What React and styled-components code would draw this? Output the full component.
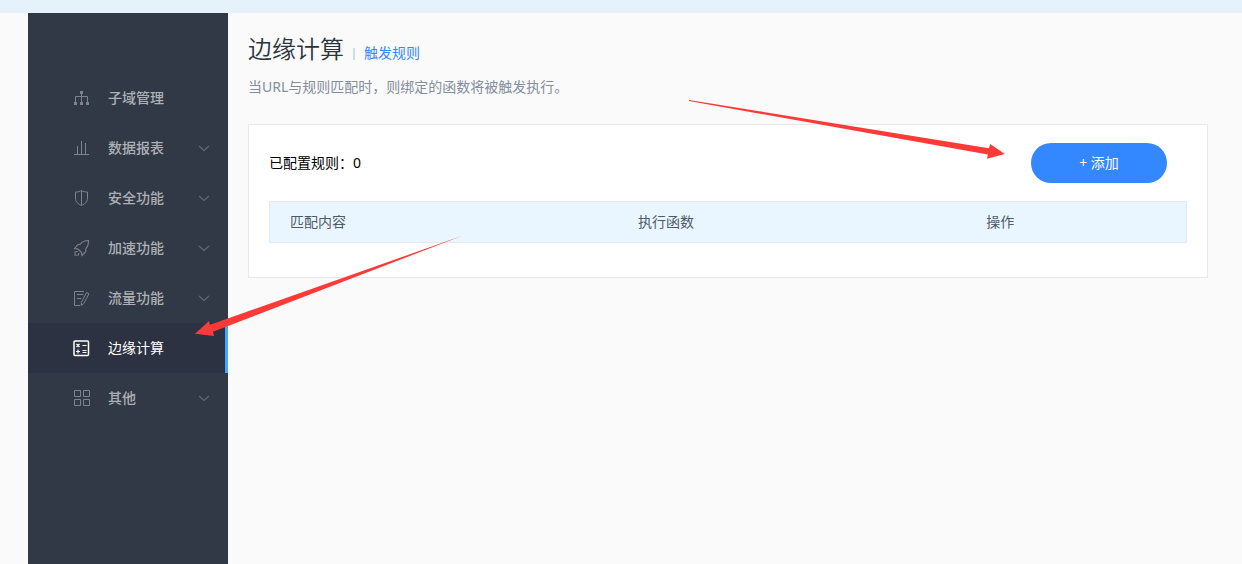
import React from "react";
import styled, { createGlobalStyle } from "styled-components";

const GlobalStyle = createGlobalStyle`
  *, *::before, *::after { box-sizing: border-box; }
  html, body, #root { height: 100%; }
  body {
    margin: 0;
    background: #fafafa;
    font-family: "Noto Sans", "Noto Sans CJK SC", sans-serif;
    font-size: 14px;
    line-height: 20px;
    color: #000;
  }
`;

const Page = styled.div`
  position: relative;
  display: flex;
  flex-direction: column;
  min-height: 100%;
  overflow: hidden;
`;

const TopBar = styled.header`
  flex: none;
  height: 13px;
  background: #e6f2fb;
`;

const Body = styled.div`
  flex: 1;
  display: flex;
  padding: 0 34px 0 28px;
`;

const Sidebar = styled.nav`
  flex: none;
  width: 200px;
  padding-top: 60px;
  background: #323946;
`;

const Menu = styled.ul`
  margin: 0;
  padding: 0;
  list-style: none;
`;

const MenuLink = styled.a`
  display: flex;
  align-items: center;
  height: 50px;
  padding: 0 18px 0 45px;
  border-right: 3px solid ${(p) => (p.$active ? "#3fa9ff" : "transparent")};
  background: ${(p) => (p.$active ? "#2d3242" : "transparent")};
  color: ${(p) => (p.$active ? "#fff" : "#adb0b5")};
  font-weight: ${(p) => (p.$active ? 400 : 500)};
  text-decoration: none;
`;

const MenuIcon = styled.svg`
  flex: none;
  width: 18px;
  height: 18px;
  margin-right: 17px;
  fill: none;
  stroke: currentColor;
  color: ${(p) => (p.$active ? "#fff" : "#7d828b")};
`;

const MenuLabel = styled.span`
  flex: 1;
`;

const Chevron = styled.svg`
  width: 12px;
  height: 8px;
  margin-right: -3px;
  fill: none;
  stroke: #646970;
  stroke-width: 1.2;
`;

const Main = styled.main`
  flex: 1;
  min-width: 0;
  padding: 20px 0 20px 20px;
`;

const TitleRow = styled.div`
  display: flex;
  align-items: flex-end;
  height: 32px;
`;

const Title = styled.h1`
  margin: 0;
  font-size: 24px;
  line-height: 32px;
  font-weight: 350;
  color: #2b3540;
`;

const Divider = styled.span`
  width: 2px;
  height: 12px;
  margin: 0 9px 5px;
  background: #ccdcec;
`;

const SubLink = styled.a`
  line-height: 24px;
  color: #3388ff;
  text-decoration: none;
`;

const Description = styled.p`
  margin: 12px 0 27px;
  color: #848e9c;
`;

const Card = styled.section`
  padding: 18px 20px 34px;
  border: 1px solid #e6e8ec;
  background: #fff;
`;

const CardHeader = styled.div`
  display: flex;
  align-items: center;
  justify-content: space-between;
  margin-bottom: 18px;
  padding-right: 20px;
`;

const AddButton = styled.button`
  width: 136px;
  height: 40px;
  padding: 0;
  border: 0;
  border-radius: 20px;
  background: #3388ff;
  color: #fff;
  font: inherit;
  cursor: pointer;
`;

const RuleTable = styled.table`
  width: 100%;
  table-layout: fixed;
  border-spacing: 0;
  border: 1px solid #e2e9f0;
  background: #e9f6ff;
`;

const HeadCell = styled.th`
  width: ${(p) => p.$width};
  height: 40px;
  padding: 0 20px;
  text-align: left;
  font-weight: 400;
  color: #4e5a68;
`;

const Annotations = styled.svg`
  position: absolute;
  top: 0;
  left: 0;
  width: 1242px;
  height: 564px;
  fill: #fc3a38;
  pointer-events: none;
`;

const icons = {
  tree: (
    <>
      <path d="M8.5 4v10M2.5 14V7.5h12V14" />
      <path fill="currentColor" stroke="none" d="M7 2h3v3H7zM1 13h3v3H1zM7 13h3v3H7zM13 13h3v3h-3z" />
    </>
  ),
  bars: <path d="M1 15.5h15M4.5 7v8M8.5 2v13M12.5 4v11" />,
  shield: <path d="M8.5 1.5C7 2.6 4.8 3 2.5 3v6c0 4 2.8 6.2 6 7.5 3.2-1.3 6-3.5 6-7.5V3c-2.3 0-4.5-.4-6-1.5zM8.500 1.5v15" />,
  rocket: (
    <path
      strokeWidth="1.1"
      d="M15.5 1.5C12 1.5 9.500 2.500 7.500 5L4.500 6 1.500 9.500l3.500.5 3.500 3.500.5 3 3.500-3.500.5-3.500C15 7.500 15.700 5 15.500 1.500zM4.800 12.500L2 13v3.200l3.500-.2.500-2"
    />
  ),
  note: (
    <path d="M11 2.500H1.500v14H7M4 5.500h6.500M4 9.500h4M13.600 3.600l2.400 1.200-5.200 9.700-2.600 2 .2-3.200z" />
  ),
  calc: (
    <>
      <rect x="1" y="2" width="14.500" height="14.500" rx="1" strokeWidth="1.500" />
      <path d="M3.500 5l3 3M6.500 5l-3 3M9.500 6.500h4M3 12.500h4M5 10.500v4M9.500 11.500h4M9.500 13.500h4" strokeWidth="1.200" />
    </>
  ),
  grid: <path d="M1.500 1.500h6v6h-6zM10.500 1.500h6v6h-6zM1.500 10.500h6v6h-6zM10.500 10.500h6v6h-6z" />,
};

const menuItems = [
  { icon: "tree", label: "子域管理" },
  { icon: "bars", label: "数据报表", expandable: true },
  { icon: "shield", label: "安全功能", expandable: true },
  { icon: "rocket", label: "加速功能", expandable: true },
  { icon: "note", label: "流量功能", expandable: true },
  { icon: "calc", label: "边缘计算", active: true },
  { icon: "grid", label: "其他", expandable: true },
];

export default function App() {
  return (
    <Page>
      <GlobalStyle />
      <TopBar />
      <Body>
        <Sidebar>
          <Menu>
            {menuItems.map(({ icon, label, expandable, active }) => (
              <li key={label}>
                <MenuLink href="#" $active={active} aria-current={active ? "page" : undefined}>
                  <MenuIcon viewBox="0 0 18 18" $active={active} aria-hidden="true">
                    {icons[icon]}
                  </MenuIcon>
                  <MenuLabel>{label}</MenuLabel>
                  {expandable && (
                    <Chevron viewBox="0 0 12 8" aria-hidden="true">
                      <path d="M1 2l5 4.500L11 2" />
                    </Chevron>
                  )}
                </MenuLink>
              </li>
            ))}
          </Menu>
        </Sidebar>
        <Main>
          <TitleRow>
            <Title>边缘计算</Title>
            <Divider />
            <SubLink href="#">触发规则</SubLink>
          </TitleRow>
          <Description>当URL与规则匹配时，则绑定的函数将被触发执行。</Description>
          <Card>
            <CardHeader>
              <span>已配置规则：0</span>
              <AddButton type="button">+ 添加</AddButton>
            </CardHeader>
            <RuleTable>
              <thead>
                <tr>
                  <HeadCell $width="38%">匹配内容</HeadCell>
                  <HeadCell $width="38%">执行函数</HeadCell>
                  <HeadCell $width="24%">操作</HeadCell>
                </tr>
              </thead>
            </RuleTable>
          </Card>
        </Main>
      </Body>
      <Annotations viewBox="0 0 1242 564" aria-hidden="true">
        <path d="M689 100L989 148.200L990.200 144L1004.800 154L987 158.800L987.800 154.600L689 101z" />
        <path d="M463 235.500L210 324.700L209 321L195 333.800L214 336L213 331.700z" />
      </Annotations>
    </Page>
  );
}
